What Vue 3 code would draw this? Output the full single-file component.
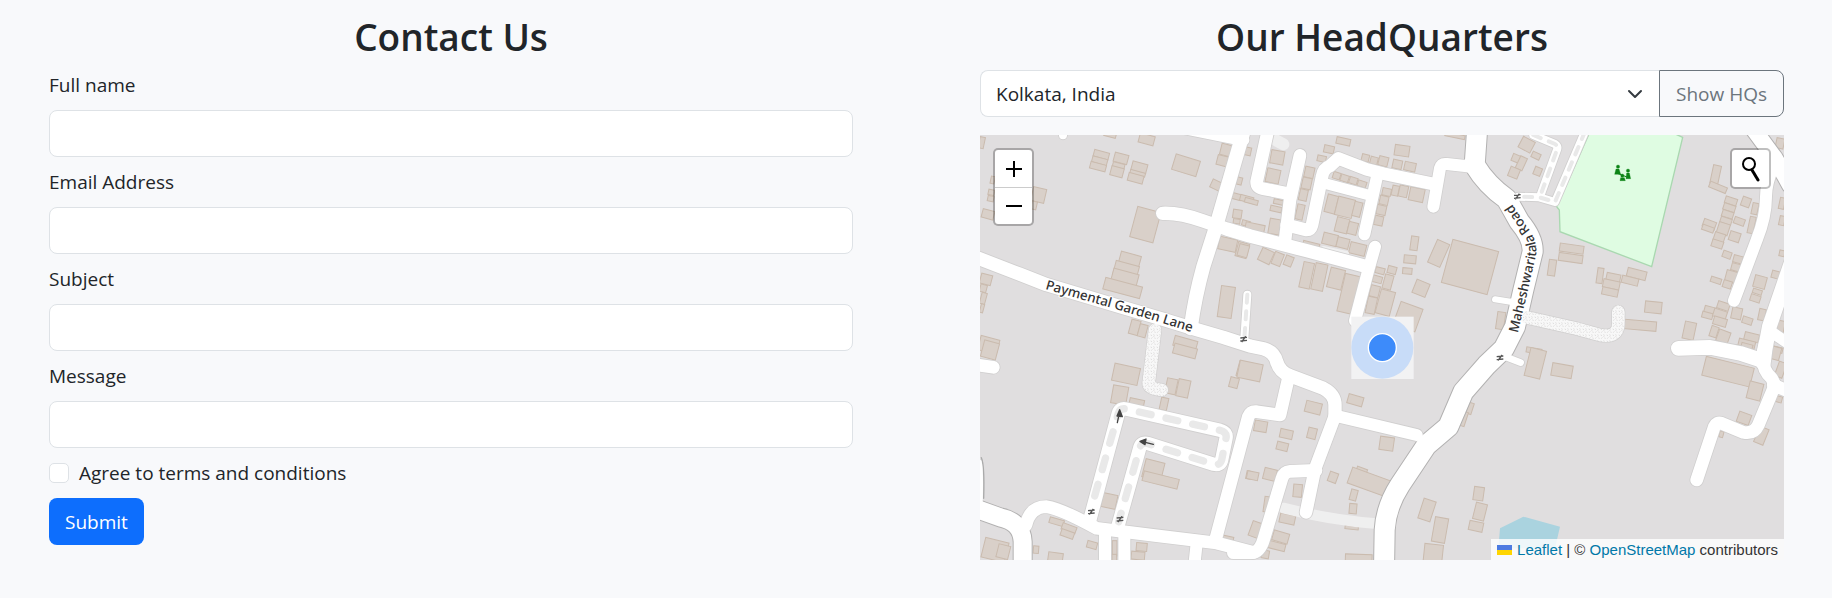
<script setup>
import { ref } from 'vue'

const form = ref({ name: '', email: '', subject: '', message: '', agree: false })
const fields = [
  { key: 'name', label: 'Full name', type: 'text' },
  { key: 'email', label: 'Email Address', type: 'email' },
  { key: 'subject', label: 'Subject', type: 'text' },
  { key: 'message', label: 'Message', type: 'text' },
]
const offices = ['Kolkata, India', 'Bengaluru, India', 'London, UK']
const office = ref(offices[0])

// Map sheets. Buildings are [centre x, centre y, width, height, angle]; roads are [path, width].
const sheets = [
  {
    id: 'nw', at: 'translate(2910 390)',
    buildings: [
      [394, 74, 46, 20, 15], [389, 92, 46, 18, 15], [384, 110, 48, 20, 15], [453, 85, 42, 28, 15], [446, 106, 36, 14, 15], [441, 125, 38, 28, 15],
      [508, 112, 46, 28, 15], [503, 130, 46, 12, 15], [497, 145, 46, 24, 15], [648, 106, 76, 48, 17], [530, 28, 46, 28, 15], [420, 15, 36, 12, 15],
      [35, 38, 16, 34, 12], [206, 195, 40, 42, 13], [192, 226, 16, 24, 13], [68, 150, 12, 22, 12], [64, 187, 18, 16, 12], [62, 206, 18, 16, 12], [54, 253, 36, 26, 15],
      [768, 60, 32, 34, 14], [757, 92, 32, 30, 14], [738, 165, 30, 26, 25], [808, 153, 16, 22, 14], [526, 284, 72, 94, 15],
      [480, 388, 62, 34, 15], [468, 422, 72, 44, 15], [464, 446, 78, 44, 15], [458, 474, 114, 36, 15], [773, 343, 54, 38, 12], [817, 360, 34, 44, 15], [769, 516, 42, 94, 8],
      [800, 200, 26, 18, 15], [830, 207, 40, 18, 15], [802, 252, 26, 26, 8], [800, 274, 20, 14, 8], [828, 280, 24, 16, 15],
      [48, 448, 34, 30, 15], [40, 475, 20, 22, 15], [40, 505, 16, 34, 15], [36, 535, 10, 26, 15], [56, 645, 58, 44, 15],
      [494, 592, 28, 44, 15], [518, 602, 24, 38, 15], [646, 640, 70, 30, 15],
    ],
    casedRoads: [],
    roads: [
      ['M10 379 L150 433 L230 464 L450 530 L570 565 L680 599 L760 622 L840 648 L880 656 Q912 664 920 695 Q930 727 960 737 L1060 775 Q1095 793 1095 825 L1095 862', 40],
      ['M662 595 Q675 500 700 410 L735 300 L822 0', 42],
      ['M630 -8 L820 30', 36],
      ['M578 250 Q630 248 700 273 L770 297 L840 318 L1010 362 L1190 410', 40],
      ['M279 12 L279 16', 24],
    ],
    gravel: ['M555 600 L536 760 Q536 776 575 780'],
    alleys: [],
  },
  {
    id: 'n', at: 'translate(3720 390)',
    buildings: [
      [310, 34, 42, 20, 12], [267, 58, 30, 22, 12], [245, 86, 26, 18, 12], [486, 62, 44, 32, 8], [112, 82, 40, 40, 10], [99, 138, 40, 42, 12],
      [208, 127, 28, 32, 12], [200, 160, 28, 34, 12], [190, 195, 24, 34, 12], [180, 246, 22, 46, 12], [24, 64, 18, 24, 12], [34, 214, 40, 14, 15], [116, 216, 30, 14, 12],
      [108, 237, 34, 16, 12], [104, 290, 34, 46, 10], [45, 292, 58, 22, 12], [10, 362, 30, 36, 15], [78, 378, 38, 40, 25], [113, 387, 28, 38, 22], [146, 393, 24, 30, 22],
      [290, 137, 22, 20, 18], [314, 145, 24, 20, 18], [340, 152, 24, 20, 18], [366, 162, 26, 18, 18], [376, 84, 22, 22, 14], [402, 92, 22, 22, 14], [430, 94, 28, 28, 14],
      [472, 103, 28, 26, 12], [510, 110, 34, 26, 12], [274, 222, 32, 54, 14], [315, 232, 52, 56, 14], [352, 238, 24, 44, 14], [306, 286, 38, 44, 14], [338, 295, 28, 36, 14],
      [270, 328, 44, 34, 14], [309, 339, 36, 30, 14], [353, 357, 48, 34, 14], [214, 343, 50, 12, 14], [440, 186, 26, 22, 12], [432, 211, 26, 26, 12], [424, 240, 28, 28, 12], [416, 272, 26, 28, 12],
      [466, 182, 20, 30, 12], [490, 184, 26, 34, 12], [530, 194, 44, 40, 12], [523, 340, 22, 42, 8], [510, 388, 36, 24, 5], [502, 423, 28, 18, 5], [543, 475, 42, 42, 22],
      [596, 370, 40, 74, 24], [690, 411, 142, 134, 15], [200, 436, 32, 78, 12], [238, 441, 36, 80, 12], [288, 446, 44, 60, 14], [328, 492, 50, 116, 13],
      [456, 420, 26, 22, 15], [420, 422, 28, 18, 15], [412, 448, 28, 20, 15], [444, 456, 26, 44, 15], [404, 484, 28, 34, 14], [394, 526, 28, 50, 12], [436, 518, 44, 74, 15],
      [504, 560, 70, 72, 20], [782, 572, 24, 52, 8], [645, 17, 60, 12, 12],
    ],
    casedRoads: [['M712 -10 L704 105 Q740 165 800 207 L838 275 Q880 325 878 365 L850 480 L825 590 L792 655 L740 705 L670 785 L625 890 L560 945 L480 1065 Q438 1130 434 1200 L432 1320', 60]],
    roads: [
      ['M83 5 L50 155 Q50 172 70 176 L150 192', 38],
      ['M180 76 L150 210 L134 340', 38],
      ['M140 285 L200 300 Q212 300 216 285 L246 140 Q250 115 270 108 L295 85 L380 118 L430 131 L580 162', 38],
      ['M245 158 L390 196', 32],
      ['M412 135 L373 313', 36],
      ['M580 230 L600 115 Q604 100 620 102 L710 112', 36],
      ['M405 350 L385 420 L345 572', 36],
      ['M765 508 L830 518', 18],
    ],
    gravel: [],
    alleys: ['M22 494 L12 640'],
  },
  {
    id: 'ne', at: 'translate(4530 390)',
    buildings: [
      [50, 44, 40, 36, 28], [78, 77, 26, 18, 25], [18, 85, 24, 22, 22], [34, 100, 22, 40, 25], [12, 128, 30, 30, 22], [83, 124, 22, 24, 22],
      [617, 134, 24, 56, 12], [624, 172, 54, 18, 22], [663, 213, 36, 20, 18], [658, 233, 36, 20, 18], [653, 253, 34, 20, 18], [648, 272, 34, 18, 18], [708, 216, 26, 28, 20], [735, 236, 18, 34, 12],
      [688, 274, 32, 20, 20], [725, 285, 18, 50, 12], [598, 283, 38, 24, 20], [594, 296, 36, 16, 20], [640, 296, 34, 34, 18], [628, 322, 32, 26, 18], [674, 320, 32, 28, 18], [622, 342, 34, 22, 18],
      [651, 374, 26, 20, 20], [684, 388, 28, 22, 15], [678, 412, 28, 22, 15], [664, 440, 34, 34, 15], [618, 451, 32, 16, 18], [652, 463, 26, 22, 18], [750, 456, 36, 36, 15], [742, 485, 28, 14, 18], [736, 505, 30, 20, 18], [797, 434, 24, 22, 15],
      [816, 220, 16, 34, 12], [816, 272, 16, 28, 12], [816, 370, 16, 18, 12], [810, 40, 24, 30, 12],
      [185, 356, 72, 24, 8], [182, 384, 72, 24, 8], [126, 413, 22, 48, 8], [270, 437, 18, 46, 8], [310, 443, 42, 24, 12], [304, 463, 50, 24, 12], [300, 486, 48, 22, 12], [380, 432, 58, 26, 14], [360, 452, 50, 22, 14],
      [430, 532, 50, 34, 6], [391, 586, 96, 28, 5], [538, 602, 34, 52, 12], [600, 540, 34, 20, 15], [592, 556, 32, 18, 15], [640, 528, 36, 22, 18], [630, 552, 40, 24, 18], [680, 550, 30, 34, 12], [712, 572, 30, 20, 18],
      [630, 575, 40, 24, 16], [612, 605, 22, 32, 18], [640, 620, 36, 36, 20], [756, 554, 20, 34, 12], [812, 590, 22, 36, 12], [725, 622, 44, 24, 14], [710, 642, 50, 24, 14], [690, 655, 30, 16, 14], [800, 658, 36, 16, 14], [72, 662, 46, 16, 10],
    ],
    casedRoads: [['M725 -10 L795 85 L840 165', 48]],
    roads: [
      ['M790 110 Q768 160 768 200 Q768 260 740 330 L672 512', 36],
      ['M850 380 L778 590 L765 660 L760 700', 44],
      ['M775 600 L850 650', 34],
      ['M505 655 L600 652 L690 670 L752 690', 44],
      ['M765 640 Q745 710 785 745 L795 765 L745 885 Q732 913 700 907 L635 880 Q620 875 613 890 L560 1050', 38],
      ['M790 765 L850 790', 38],
    ],
    gravel: ['M50 562 L200 596 L270 615 Q325 625 325 580 L325 545'],
    alleys: ['M225 5 L135 216 L88 202 L25 200', 'M70 15 L135 42 Q146 50 140 62 L90 200'],
  },
  {
    id: 'sw', at: 'translate(2910 1035)',
    buildings: [
      [60, 15, 46, 50, 15], [468, 88, 78, 52, 12], [449, 150, 46, 54, 10], [500, 174, 44, 24, 12], [604, 124, 32, 46, 12], [640, 130, 36, 52, 12], [582, 177, 22, 38, 12], [645, 18, 70, 30, 15],
      [830, 76, 54, 46, 15], [792, 113, 26, 30, 15], [550, 375, 58, 56, 14], [572, 405, 108, 30, 14], [418, 468, 44, 42, 12], [260, 530, 44, 18, 16], [297, 550, 44, 20, 20], [292, 567, 40, 20, 20], [366, 600, 30, 20, 15],
      [198, 614, 16, 22, 5], [256, 640, 44, 34, 8], [75, 615, 72, 60, 14], [100, 620, 36, 40, 14], [434, 610, 14, 46, 0], [433, 638, 14, 20, 0], [515, 606, 32, 24, 5], [504, 632, 40, 24, 5], [772, 582, 36, 18, 12], [836, 390, 14, 24, 12],
    ],
    casedRoads: [['M10 488 L90 517 Q155 530 158 590 L158 670', 54]],
    roads: [
      ['M10 58 L70 67', 38],
      ['M168 540 Q180 485 230 485 Q270 490 380 550 L560 572 L740 594 L850 622', 38],
      ['M358 530 L445 205 Q450 188 468 192 L750 256 Q772 262 768 280 L755 345 Q750 362 732 358 L535 296 Q516 290 510 306 L442 550', 40],
      ['M405 560 L405 670', 36],
      ['M463 560 L463 670', 36],
      ['M680 595 L672 670', 36],
      ['M735 590 L835 215 Q842 198 860 200 L930 210 L955 100', 38],
    ],
    gravel: [],
    alleys: [],
  },
  {
    id: 's', at: 'translate(3720 1035)',
    buildings: [
      [30, 78, 70, 52, 12], [346, 166, 46, 28, 16], [220, 188, 48, 34, 14], [216, 265, 26, 32, 14], [139, 267, 38, 26, 12], [127, 304, 34, 24, 14], [62, 244, 38, 32, 10], [440, 296, 42, 40, 8],
      [38, 392, 34, 24, 12], [90, 388, 38, 34, 14], [279, 397, 26, 30, 20], [173, 437, 26, 38, 5], [362, 385, 32, 34, 20], [390, 412, 128, 50, 20], [341, 450, 20, 32, 15], [339, 491, 22, 30, 5], [82, 478, 20, 46, 8],
      [48, 554, 34, 46, 20], [142, 522, 46, 28, 12], [122, 576, 48, 30, 16], [110, 603, 52, 22, 14], [76, 628, 22, 24, 10], [356, 642, 80, 28, 2], [561, 495, 38, 62, 18], [600, 555, 40, 74, 10],
      [580, 624, 56, 52, 6], [716, 446, 30, 40, 8], [720, 500, 34, 50, 14], [708, 544, 42, 28, 12], [690, 190, 16, 34, 18], [672, 222, 14, 44, 18], [335, 548, 40, 10, 6],
    ],
    casedRoads: [],
    roads: [
      ['M285 212 L530 270', 36],
      ['M286 210 L225 372 L198 502', 38],
      ['M228 376 L150 379 Q132 380 126 400 L72 580 Q60 622 35 623 L-20 623', 38],
    ],
    gravel: [],
    alleys: [],
  },
  {
    id: 'se', at: 'translate(4440 1035)',
    buildings: [
      [166, 55, 48, 86, 14], [246, 77, 62, 38, 10], [744, 80, 148, 58, 14], [825, 138, 42, 52, 14], [792, 220, 38, 32, 20], [844, 272, 30, 50, 22], [724, 268, 12, 18, 15], [884, 24, 34, 38, 15], [902, 74, 24, 46, 20],
      [897, 163, 18, 18, 15], [800, 6, 34, 20, 15],
    ],
    casedRoads: [],
    roads: [['M50 25 L122 53', 20]],
    gravel: [],
    alleys: [],
  },
]
const loop = 'M362 495 L445 205 Q450 188 468 192 L750 256 Q772 262 768 280 L755 345 Q750 362 732 358 L535 296 Q516 290 510 306 L446 530'
const barriers = [[3731, 1018], [4552, 590], [4500, 1074], [3274, 1536], [3360, 1558]]
</script>

<template>
  <main class="page">
    <section class="column">
      <h2>Contact Us</h2>
      <form @submit.prevent>
        <div v-for="f in fields" :key="f.key" class="field">
          <label :for="f.key">{{ f.label }}</label>
          <input :id="f.key" v-model="form[f.key]" class="control" :type="f.type">
        </div>
        <div class="check">
          <input id="agree" v-model="form.agree" type="checkbox">
          <label for="agree">Agree to terms and conditions</label>
        </div>
        <button class="submit" type="submit">Submit</button>
      </form>
    </section>

    <section class="column">
      <h2>Our HeadQuarters</h2>
      <div class="picker">
        <div class="select-wrap">
          <select v-model="office" class="control" aria-label="Headquarters">
            <option v-for="o in offices" :key="o">{{ o }}</option>
          </select>
          <svg class="chevron" viewBox="0 0 16 16" aria-hidden="true"><path d="m2 5 6 6 6-6" /></svg>
        </div>
        <button class="show" type="button">Show HQs</button>
      </div>

      <div class="map">
        <svg class="tiles" viewBox="2940 405 2412 1275" preserveAspectRatio="xMidYMid slice" aria-label="Street map">
          <defs>
            <pattern id="gravel" width="18" height="18" patternUnits="userSpaceOnUse">
              <rect width="18" height="18" fill="#f8f8f8" />
              <path d="M2 3l4 2M11 1l2 4M7 10l-3 4M13 12l4 1M10 7l3 1" stroke="#d0cfcf" stroke-width="2" />
            </pattern>
            <path id="lane" d="M3135 867 L3360 931 L3480 967 L3620 1011" />
            <path id="road" d="M4553 1000 L4584 870 L4608 765 Q4614 722 4582 681 L4535 610 L4490 545" />
          </defs>
          <path class="park" transform="translate(4530 390)" d="M240 5H480L518 22L425 410L150 305L148 240L140 230Z" />
          <path class="water" transform="translate(4440 1035)" d="M60 550L130 515L240 545L225 610H55Z" />
          <g v-for="s in sheets" :key="s.id" :transform="s.at">
            <rect
              v-for="(b, i) in s.buildings" :key="i" class="building"
              :x="b[0] - b[2] / 2" :y="b[1] - b[3] / 2" :width="b[2]" :height="b[3]"
              :transform="`rotate(${b[4]} ${b[0]} ${b[1]})`"
            />
          </g>
          <g class="faint">
            <path d="M3830 422L3850 433" stroke-width="36" />
            <path d="M3850 1524Q3990 1560 4130 1571" stroke-width="32" />
            <path d="M3970 745L4040 760" stroke-width="14" />
          </g>
          <g v-for="s in sheets" :key="s.id" class="lines" :transform="s.at">
            <path v-for="(r, i) in s.casedRoads" :key="'c' + i" class="edge dark" :d="r[0]" :stroke-width="r[1] + 6" />
            <path v-for="(r, i) in s.roads" :key="'r' + i" class="edge" :d="r[0]" :stroke-width="r[1] + 5" />
            <path v-for="(d, i) in s.gravel" :key="'g' + i" class="edge" :d="d" stroke-width="42" />
            <path v-for="(d, i) in s.alleys" :key="'a' + i" class="edge" :d="d" stroke-width="29" />
          </g>
          <g v-for="s in sheets" :key="s.id" class="lines" :transform="s.at">
            <path v-for="(d, i) in s.gravel" :key="'g' + i" :d="d" stroke="url(#gravel)" stroke-width="38" />
            <path v-for="(d, i) in s.alleys" :key="'a' + i" class="fill" :d="d" stroke-width="24" />
            <path v-for="(d, i) in s.alleys" :key="'d' + i" class="dash" :d="d" stroke-width="12" stroke-dasharray="24 26" />
            <path v-for="(r, i) in s.casedRoads" :key="'c' + i" class="fill" :d="r[0]" :stroke-width="r[1]" />
            <path v-for="(r, i) in s.roads" :key="'r' + i" class="fill" :d="r[0]" :stroke-width="r[1]" />
          </g>
          <g class="lines" transform="translate(2910 1035)">
            <path class="dash" :d="loop" stroke-width="22" stroke-dasharray="36 46" stroke-dashoffset="-44" />
            <path d="M34 338Q44 360 41 460" stroke="#aaa" stroke-width="4" />
            <path d="M30 350Q36 370 33 480" stroke="#fff" stroke-width="10" />
            <g stroke="#444" stroke-width="4" fill="#444">
              <path d="M442 233L449 200M449 194L441 213L457 215Z" />
              <path d="M550 298L517 290M510 289L528 282L525 299Z" />
            </g>
          </g>
          <g v-for="(b, i) in barriers" :key="i" class="barrier" :transform="`translate(${b[0]} ${b[1]})`">
            <path d="M-10 -4L10 -6M-10 5L10 3M-6 8L6 -9" />
          </g>
          <g transform="translate(4530 390)" fill="#0c8416" stroke="#0c8416">
            <circle cx="324" cy="110" r="5" /><circle cx="354" cy="122" r="5" /><circle cx="337" cy="137" r="5" />
            <path d="M318 117h9l5 16h-18zM350 129h8l4 17h-14zM332 143h11l3 9h-16z" />
            <path d="M322 130L356 143" fill="none" stroke-width="3" />
          </g>
          <text class="street"><textPath href="#lane">Paymental Garden Lane</textPath></text>
          <text class="street"><textPath href="#road">Maheshwaritala Road</textPath></text>
          <g class="marker">
            <rect x="4054" y="950" width="187" height="187" fill="#f2f2f3" />
            <circle cx="4147" cy="1043" r="93" fill="#c8dcf8" />
            <circle cx="4147" cy="1043" r="42" fill="#3d8bfa" stroke="#fff" stroke-width="4" />
          </g>
        </svg>

        <div class="bar zoom">
          <button type="button" aria-label="Zoom in"><svg viewBox="0 0 16 16"><path d="M0 8h16M8 0v16" /></svg></button>
          <button type="button" aria-label="Zoom out"><svg viewBox="0 0 16 16"><path d="M0 8h16" /></svg></button>
        </div>
        <div class="bar search">
          <button type="button" aria-label="Search">
            <svg class="glass" viewBox="0 0 20 26"><circle cx="8" cy="8" r="6" /><path d="M11 14L17 24" /></svg>
          </button>
        </div>
        <div class="credit">
          <svg viewBox="0 0 15 10" aria-hidden="true"><path fill="#4c7be1" d="M0 0h15v5H0z" /><path fill="#ffd500" d="M0 5h15v5H0z" /></svg>
          <a href="#leaflet">Leaflet</a> | © <a href="#osm">OpenStreetMap</a> contributors
        </div>
      </div>
    </section>
  </main>
</template>

<style>
body { background: #f8f9fb; }
</style>

<style scoped>
* { box-sizing: border-box; }
.page {
  display: grid;
  grid-template-columns: 1fr 1fr;
  gap: 127px;
  padding: 13px 48px 38px 49px;
  color: #212529;
  font: 400 19px/30px "Open Sans", "Noto Sans", sans-serif;
}
.column { min-width: 0; }
h2 { margin: 0 0 9px; font-size: 37px; font-weight: 600; line-height: 48px; text-align: center; }
button, input, select { font: inherit; color: inherit; }
.field { display: flex; flex-direction: column; gap: 10px; margin-bottom: 10px; }
.control {
  display: block;
  width: 100%;
  height: 47px;
  padding: 7px 15px;
  border: 1px solid #dee2e6;
  border-radius: 8px;
  background: #fff;
}
.check { display: flex; align-items: center; gap: 10px; margin-bottom: 10px; }
.check input {
  appearance: none;
  width: 20px;
  height: 20px;
  margin: 0;
  border: 1px solid #dee2e6;
  border-radius: 5px;
  background: #fff;
}
.check input:checked { background: #0d6efd; }
.submit {
  padding: 8px 16px;
  height: 47px;
  border: 0;
  border-radius: 8px;
  background: #0d6efd;
  color: #fff;
}
.picker { display: flex; margin-bottom: 18px; }
.select-wrap { position: relative; flex: 1; }
.select-wrap select { appearance: none; border-radius: 8px 0 0 8px; border-right: 0; }
.chevron {
  position: absolute;
  top: 16px;
  right: 16px;
  width: 16px;
  height: 16px;
  fill: none;
  stroke: #343a40;
  stroke-width: 2;
  stroke-linecap: round;
  stroke-linejoin: round;
  pointer-events: none;
}
.show {
  height: 47px;
  padding: 7px 16px;
  border: 1px solid #6c757d;
  border-radius: 0 8px 8px 0;
  background: transparent;
  color: #6c757d;
}
.map { position: relative; height: 425px; overflow: hidden; background: #e0dedf; }
.tiles { display: block; width: 100%; height: 100%; }
.park { fill: #dffce2; stroke: #a9d8b0; stroke-width: 4; }
.water { fill: #aad3df; }
.building { fill: #d9d0c9; stroke: #cabbae; stroke-width: 3; }
.faint { fill: none; stroke: #efefef; stroke-linecap: round; }
.lines { fill: none; stroke-linecap: round; stroke-linejoin: round; }
.edge { stroke: #d0cfcf; }
.dark { stroke: #b2b1b1; }
.fill { stroke: #fff; }
.dash { stroke: #e9e9e9; }
.barrier { fill: none; stroke: #555; stroke-width: 4; }
.street {
  fill: #333;
  stroke: #fff;
  stroke-width: 6;
  paint-order: stroke;
  font: 500 40px "Noto Sans", sans-serif;
}
.bar {
  position: absolute;
  top: 13px;
  border: 2px solid rgba(0, 0, 0, 0.25);
  border-radius: 5px;
  background: #fff;
  background-clip: padding-box;
}
.zoom { left: 13px; }
.search { right: 13px; }
.bar button {
  display: flex;
  align-items: center;
  justify-content: center;
  width: 37px;
  height: 37px;
  padding: 0;
  border: 0;
  background: none;
}
.bar button + button { border-top: 1px solid #ccc; }
.bar svg { width: 16px; height: 16px; fill: none; stroke: #000; stroke-width: 2; }
.bar .glass { width: 20px; height: 26px; stroke-linecap: round; }
.bar .glass path { stroke-width: 3; }
.credit {
  position: absolute;
  right: 0;
  bottom: 0;
  padding: 0 6px;
  background: rgba(255, 255, 255, 0.8);
  color: #333;
  font: 15px/21px "Liberation Sans", Arial, sans-serif;
  white-space: nowrap;
}
.credit svg { width: 15px; height: 10px; margin-right: 5px; }
.credit a { color: #0078a8; text-decoration: none; }
</style>
